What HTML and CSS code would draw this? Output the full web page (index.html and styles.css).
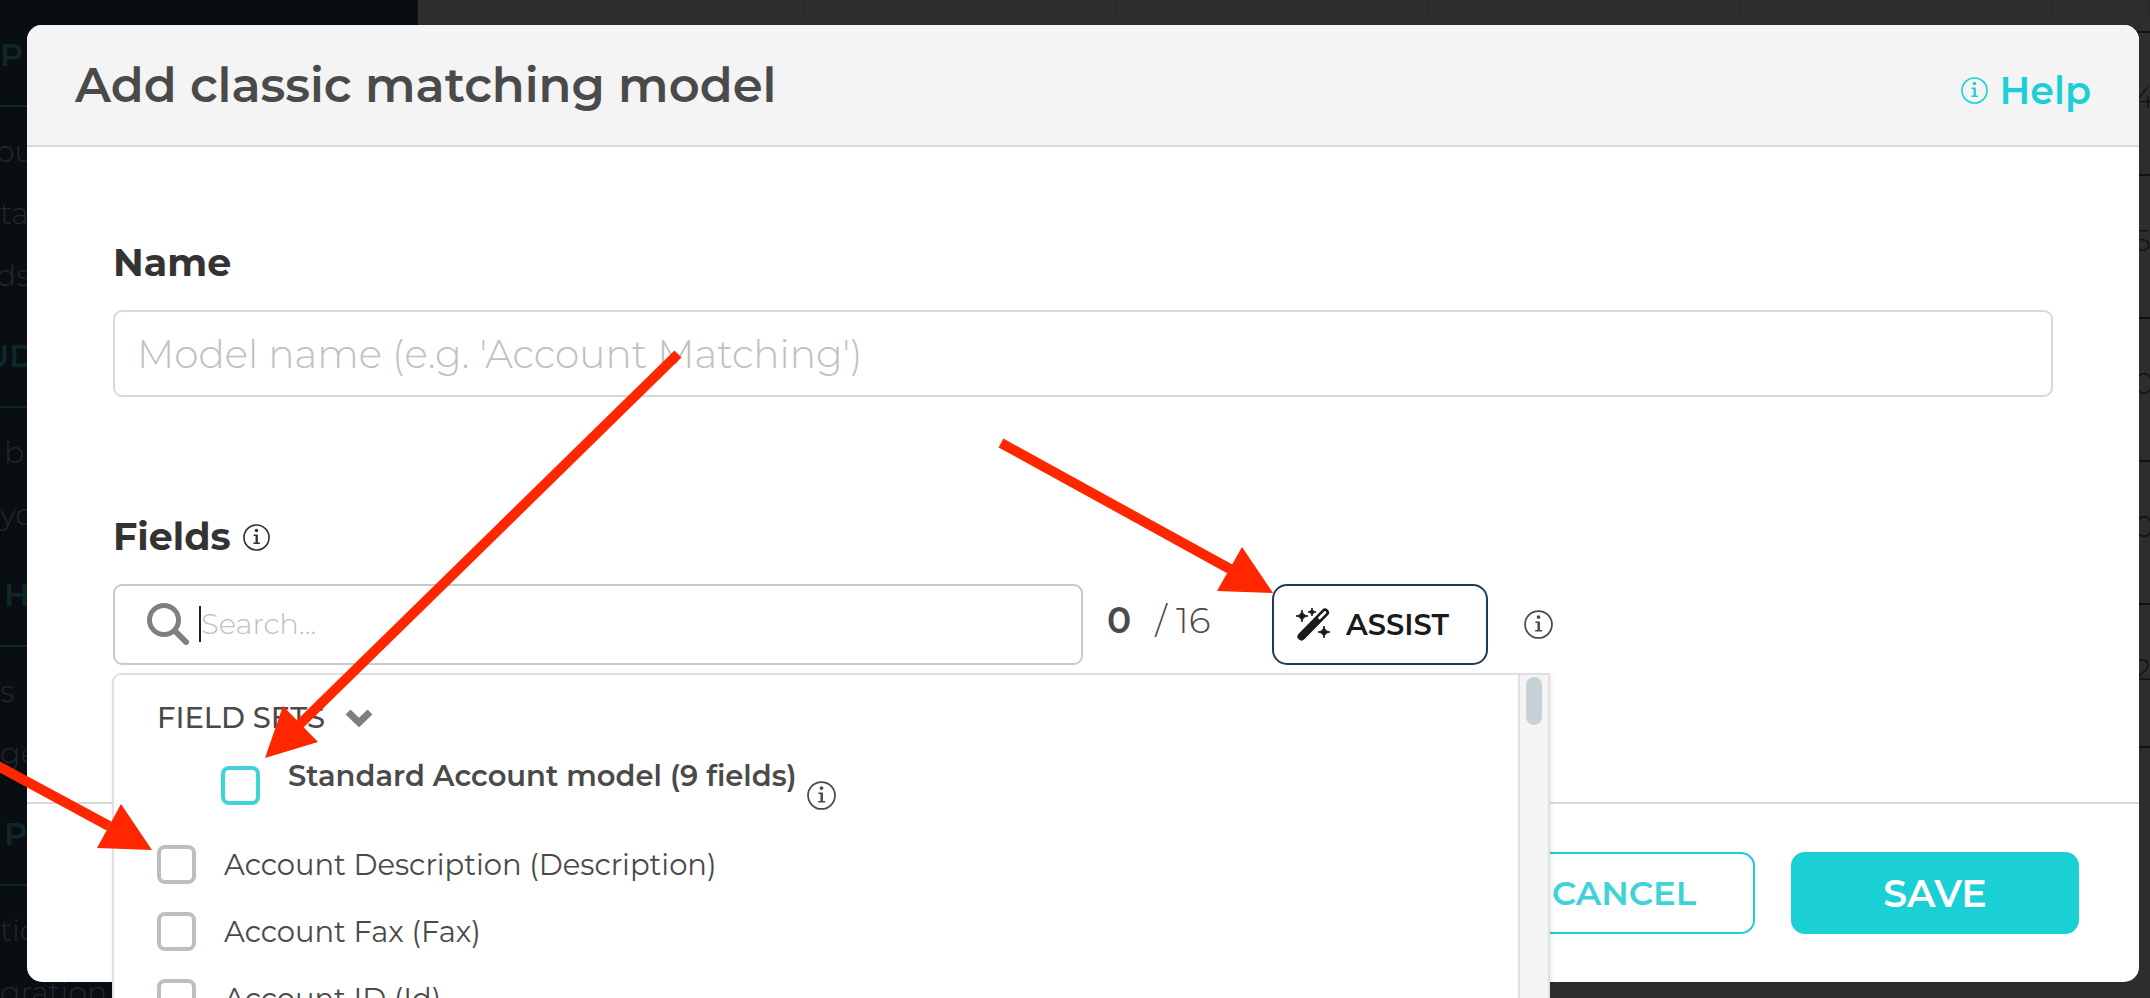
FILE: index.html
```
<!DOCTYPE html>
<html lang="en">
<head>
  <meta charset="UTF-8">
  <meta name="viewport" content="width=device-width, initial-scale=1.0">
  <title>Add classic matching model</title>
  <link rel="stylesheet" href="styles.css">
</head>
<body>
  <!-- Shared icons -->
  <svg class="icon-defs" aria-hidden="true">
    <symbol id="icon-info" viewBox="0 0 28 28">
      <circle cx="14" cy="14" r="13" fill="none" stroke="currentColor" stroke-width="1.700"/>
      <circle cx="14" cy="6.800" r="1.800" fill="currentColor"/>
      <path d="M11 11h4.400v8.300h2.100v1.500h-6.700v-1.500h2.200v-6.800H11z" fill="currentColor"/>
    </symbol>
  </svg>

  <div class="page">
    <nav class="sidebar">
      <h3 class="nav-heading">P</h3>
      <ul class="nav-list">
        <li class="pulled">ou</li>
        <li>ta</li>
        <li class="pulled">ds</li>
      </ul>
      <h3 class="nav-heading cut">UD</h3>
      <ul class="nav-list">
        <li class="indented">b</li>
        <li>yo</li>
      </ul>
      <h3 class="nav-heading indented">H</h3>
      <ul class="nav-list">
        <li>s</li>
        <li>ge</li>
      </ul>
      <h3 class="nav-heading indented">P</h3>
      <ul class="nav-list">
        <li>tio</li>
        <li>gration</li>
      </ul>
    </nav>
    <main class="content">
      <table class="models">
        <thead>
          <tr><th></th><th></th><th></th><th></th><th></th><th></th></tr>
        </thead>
        <tbody>
          <tr><td colspan="5"></td><td>4</td></tr>
          <tr><td colspan="5"></td><td>5,</td></tr>
          <tr><td colspan="5"></td><td>0</td></tr>
          <tr><td colspan="5"></td><td>0</td></tr>
          <tr><td colspan="5"></td><td>2,</td></tr>
        </tbody>
      </table>
    </main>
  </div>

  <div class="overlay">
    <section class="modal" role="dialog" aria-labelledby="modal-title">
      <header class="modal-header">
        <h1 id="modal-title">Add classic matching model</h1>
        <a class="help" href="#help">
          <svg class="info"><use href="#icon-info"/></svg>
          Help
        </a>
      </header>

      <form class="modal-body">
        <label class="field-label" for="model-name">Name</label>
        <input class="name-input" id="model-name" type="text" placeholder="Model name (e.g. 'Account Matching')">

        <div class="field-label fields-label">
          <label for="field-search">Fields</label>
          <svg class="info"><use href="#icon-info"/></svg>
        </div>
        <div class="fields-row">
          <div class="search">
            <svg class="search-icon" viewBox="0 0 42 42" aria-hidden="true">
              <circle cx="17" cy="17" r="14.500" fill="none" stroke="currentColor" stroke-width="5"/>
              <path d="M28 28l11 11" stroke="currentColor" stroke-width="6" stroke-linecap="round"/>
            </svg>
            <span class="caret"></span>
            <input id="field-search" type="text" placeholder="Search...">
          </div>
          <div class="counter"><b>0</b><span>/ 16</span></div>
          <button class="assist" type="button">
            <svg class="wand" viewBox="0 0 34 34" aria-hidden="true">
              <path d="M5.500 28.500L29 4.500" stroke="currentColor" stroke-width="8" stroke-linecap="round"/>
              <path d="M23.500 10l5.500-5.500" stroke="#fff" stroke-width="2.600" stroke-linecap="round"/>
              <path d="M6 2c.8 4 1.800 5 6 6-4.200 1-5.200 2-6 6-.8-4-1.800-5-6-6 4.200-1 5.200-2 6-6zM16 0c.5 2.700 1.300 3.500 4 4-2.700.5-3.500 1.300-4 4-.5-2.700-1.300-3.500-4-4 2.700-.5 3.500-1.300 4-4zM28 18c.8 4 1.800 5 6 6-4.200 1-5.200 2-6 6-.8-4-1.800-5-6-6 4.200-1 5.200-2 6-6z" fill="currentColor" stroke="currentColor"/>
            </svg>
            ASSIST
          </button>
          <svg class="info info-large"><use href="#icon-info"/></svg>

          <div class="dropdown">
            <div class="options">
              <button class="set-toggle" type="button">
                FIELD SETS
                <svg class="chevron" viewBox="0 0 28 18" aria-hidden="true">
                  <path d="M3 3l11 10.500L25 3" fill="none" stroke="currentColor" stroke-width="7"/>
                </svg>
              </button>
              <div class="set-option">
                <input id="set-standard" type="checkbox">
                <label for="set-standard">Standard Account model (9 fields)</label>
                <svg class="info info-large"><use href="#icon-info"/></svg>
              </div>
              <label class="option"><input type="checkbox">Account Description (Description)</label>
              <label class="option"><input type="checkbox">Account Fax (Fax)</label>
              <label class="option"><input type="checkbox">Account ID (Id)</label>
            </div>
            <div class="scroll-track"><div class="scroll-thumb"></div></div>
          </div>
        </div>
      </form>

      <footer class="modal-footer">
        <button class="cancel" type="button">CANCEL</button>
        <button class="save" type="button">SAVE</button>
      </footer>
    </section>
  </div>

  <!-- Callout arrows -->
  <svg class="arrows" width="2150" height="998" viewBox="0 0 2150 998" aria-hidden="true">
    <g stroke="#ff2600" stroke-width="10">
      <path d="M678 354L300 724"/>
      <path d="M1001 443L1230 569"/>
      <path d="M-4 765L109 826"/>
    </g>
    <g fill="#ff2600">
      <path d="M265 758l18-52 35 36z"/>
      <path d="M1273 593l-31-46-25 44z"/>
      <path d="M152 850l-31-46-24 44z"/>
    </g>
  </svg>
</body>
</html>
```

FILE: styles.css
```
:root {
  --teal: #1bd0d4;
  --text: #4a4a4a;
  --text-dark: #333;
  --line: #d9d9d9;
  --placeholder: #c0c0c0;
  --page-bg: #2d2d2d;
  --sidebar-bg: #090e13;
}

* {
  box-sizing: border-box;
}

body {
  margin: 0;
  height: 100vh;
  overflow: hidden;
  position: relative;
  font-family: "Montserrat", "Inter", sans-serif;
  font-size: 29px;
  color: var(--text);
  background-color: var(--page-bg);
}

button,
input {
  font-family: inherit;
}

.icon-defs {
  position: absolute;
  width: 0;
  height: 0;
}

/* Page behind the modal */
.page {
  display: flex;
  height: 100vh;
  overflow: hidden;
  font-size: 30px;
}

.sidebar {
  flex: 0 0 418px;
  padding-top: 6px;
  overflow: hidden;
  background-color: var(--sidebar-bg);
  color: #25282b;
}

.nav-heading {
  margin: 0;
  padding: 26px 0 27px;
  border-bottom: 2px solid #0e2626;
  font-size: 32px;
  line-height: 46px;
  font-weight: 600;
  color: #0e2828;
}

.nav-list {
  margin: 0;
  padding: 14px 0 0;
  list-style: none;
  font-weight: 300;
  line-height: 62px;
}

.indented {
  padding-left: 4px;
}

.pulled {
  text-indent: -4px;
}

.cut {
  text-indent: -16px;
}

.content {
  flex: 1;
}

.models {
  width: 100%;
  table-layout: fixed;
  border-collapse: collapse;
}

.models th {
  height: 32px;
  width: 312px;
  padding: 0;
  border-bottom: 2px solid #111;
  background: linear-gradient(#292929, #292929) right top / 2px 14px no-repeat;
}

.models th:first-child {
  width: 387px;
}

.models th:last-child {
  width: auto;
}

.models td {
  height: 143px;
  padding: 0 0 12px 81px;
  border-bottom: 2px solid #111;
  color: #111;
  font-weight: 300;
  white-space: nowrap;
}

/* Modal */
.overlay {
  position: absolute;
  inset: 0;
  display: flex;
  padding: 25px 11px 16px 27px;
}

.modal {
  flex: 1;
  display: flex;
  flex-direction: column;
  border-radius: 15px;
  background-color: #fff;
}

.modal-header {
  display: flex;
  justify-content: space-between;
  align-items: center;
  height: 122px;
  padding: 0 48px;
  border-bottom: 2px solid var(--line);
  border-radius: 15px 15px 0 0;
  background-color: #f4f4f4;
}

.modal-header h1 {
  margin: 0;
  font-size: 48px;
  font-weight: 600;
}

.help {
  display: flex;
  align-items: center;
  gap: 12px;
  padding-top: 10px;
  font-size: 38px;
  font-weight: 600;
  color: var(--teal);
  text-decoration: none;
}

.info {
  flex: none;
  width: 27px;
  height: 27px;
}

.info-large {
  width: 29px;
  height: 29px;
}

.modal-body {
  flex: 1;
  padding: 92px 86px 0;
}

.field-label {
  display: block;
  font-size: 38px;
  line-height: 48px;
  font-weight: 700;
  color: var(--text-dark);
}

.name-input {
  display: block;
  width: 100%;
  height: 87px;
  margin-top: 23px;
  padding: 0 22px;
  border: 2px solid var(--line);
  border-radius: 9px;
  font-size: 39px;
  font-weight: 300;
}

input::placeholder {
  color: var(--placeholder);
  opacity: 1;
}

.fields-label {
  display: flex;
  align-items: center;
  gap: 12px;
  margin-top: 116px;
}

.fields-row {
  position: relative;
  display: flex;
  align-items: center;
  margin-top: 23px;
}

.search {
  flex: 0 0 50%;
  display: flex;
  align-items: center;
  height: 81px;
  padding: 0 32px 2px;
  border: 2px solid #c9c9c9;
  border-radius: 9px;
}

.search-icon {
  width: 42px;
  height: 42px;
  color: #7d7f80;
}

.caret {
  width: 2px;
  height: 36px;
  margin-left: 10px;
  background-color: #222;
}

.search input {
  flex: 1;
  min-width: 0;
  padding: 0;
  border: none;
  outline: none;
  background: none;
  font-size: 29px;
  font-weight: 300;
}

.counter {
  display: flex;
  gap: 24px;
  width: 165px;
  margin: 0 0 10px 24px;
  font-size: 36px;
  white-space: nowrap;
}

.counter b {
  font-weight: 600;
}

.counter span {
  font-weight: 300;
}

.assist {
  display: flex;
  align-items: center;
  gap: 16px;
  width: 216px;
  height: 81px;
  margin-right: 36px;
  padding: 0 22px;
  border: 2px solid #203c53;
  border-radius: 15px;
  background-color: #fff;
  font-size: 29px;
  font-weight: 600;
  color: #1a1a1a;
}

.wand {
  flex: none;
  width: 34px;
  height: 34px;
}

/* Options list, drawn over the footer */
.dropdown {
  position: absolute;
  top: 89px;
  left: -1px;
  z-index: 1;
  display: flex;
  width: 1438px;
  border: 2px solid #e0e0e0;
  border-radius: 9px 0 0 0;
  background-color: #fff;
  box-shadow: 1px 2px 4px rgba(0, 0, 0, 0.1);
}

.options {
  flex: 1;
  padding: 23px 43px 0;
}

.set-toggle {
  display: flex;
  align-items: center;
  gap: 20px;
  padding: 0;
  border: none;
  background: none;
  font-size: 29px;
  line-height: 40px;
  font-weight: 500;
  color: var(--text);
}

.chevron {
  width: 28px;
  height: 18px;
  color: #7d7f80;
}

.set-option {
  display: flex;
  align-items: flex-start;
  height: 75px;
  margin-top: 18px;
  padding-left: 64px;
  line-height: 40px;
  font-weight: 600;
}

.set-option label {
  margin: 0 10px 0 28px;
}

.set-option .info {
  margin-top: 25px;
}

input[type="checkbox"] {
  appearance: none;
  flex: none;
  width: 39px;
  height: 39px;
  margin: 0;
  border: 4px solid #babfc6;
  border-radius: 8px;
  background-color: #fff;
}

.set-option input[type="checkbox"] {
  margin-top: 10px;
  border-color: #3dd3d7;
}

.option {
  display: flex;
  align-items: center;
  gap: 28px;
  height: 67px;
  font-weight: 400;
}

.scroll-track {
  width: 30px;
  padding: 2px 6px;
  border-left: 2px solid #e0e0e0;
  background-color: #f4f4f4;
}

.scroll-thumb {
  width: 16px;
  height: 48px;
  border-radius: 8px;
  background-color: #c7d2d7;
}

.modal-footer {
  display: flex;
  justify-content: flex-end;
  gap: 36px;
  padding: 48px 60px;
  border-top: 2px solid var(--line);
}

.modal-footer button {
  height: 82px;
  border: 2px solid var(--teal);
  border-radius: 14px;
}

.cancel {
  width: 262px;
  background-color: #fff;
  font-size: 34px;
  font-weight: 600;
  color: #3dd3d7;
}

.save {
  width: 288px;
  background-color: var(--teal);
  font-size: 38px;
  font-weight: 600;
  color: #fff;
}

.arrows {
  position: absolute;
  top: 0;
  left: 0;
  z-index: 2;
  pointer-events: none;
}
```
